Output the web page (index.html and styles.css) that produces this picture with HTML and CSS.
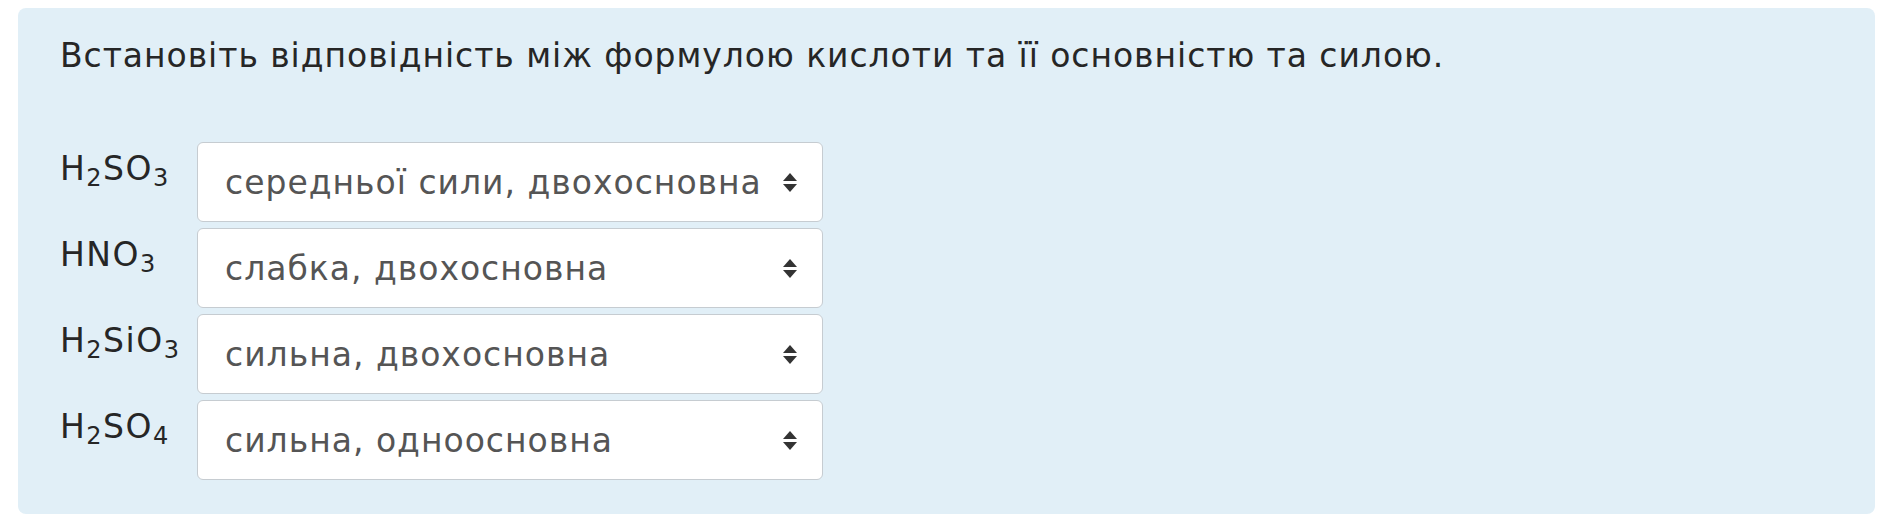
FILE: index.html
```html
<!DOCTYPE html>
<html lang="uk">
<head>
<meta charset="utf-8">
<link rel="stylesheet" href="styles.css">
</head>
<body>
<div class="page">
  <div class="panel">
    <p class="question">Встановіть відповідність між формулою кислоти та її основністю та силою.</p>
    <div class="rows">
      <div class="row">
        <div class="label">H<sub>2</sub>SO<sub>3</sub></div>
        <div class="select"><span class="value">середньої сили, двохосновна</span><svg class="arrows" width="14" height="19" viewBox="0 0 14 19"><path d="M7 0 L14 8 H0 Z M7 19 L14 11 H0 Z"/></svg></div>
      </div>
      <div class="row">
        <div class="label">HNO<sub>3</sub></div>
        <div class="select"><span class="value">слабка, двохосновна</span><svg class="arrows" width="14" height="19" viewBox="0 0 14 19"><path d="M7 0 L14 8 H0 Z M7 19 L14 11 H0 Z"/></svg></div>
      </div>
      <div class="row">
        <div class="label">H<sub>2</sub>SiO<sub>3</sub></div>
        <div class="select"><span class="value">сильна, двохосновна</span><svg class="arrows" width="14" height="19" viewBox="0 0 14 19"><path d="M7 0 L14 8 H0 Z M7 19 L14 11 H0 Z"/></svg></div>
      </div>
      <div class="row">
        <div class="label">H<sub>2</sub>SO<sub>4</sub></div>
        <div class="select"><span class="value">сильна, одноосновна</span><svg class="arrows" width="14" height="19" viewBox="0 0 14 19"><path d="M7 0 L14 8 H0 Z M7 19 L14 11 H0 Z"/></svg></div>
      </div>
    </div>
  </div>
</div>
</body>
</html>
```

FILE: styles.css
```css
html, body {
  margin: 0;
  padding: 0;
  background: #ffffff;
}

.page {
  padding: 8px 7px 13px 18px;
}

.panel {
  background: #e1eff7;
  border-radius: 8px;
  padding: 26px 42px 34px 42px;
  font-family: "DejaVu Sans", "Open Sans", sans-serif;
  color: #262626;
}

.question {
  margin: 0 0 64px 0;
  font-size: 33px;
  line-height: 44px;
  letter-spacing: 0.95px;
}

.rows {
  display: flex;
  flex-direction: column;
  gap: 6px;
}

.row {
  display: flex;
  align-items: flex-start;
}

.label {
  width: 137px;
  flex: none;
  font-size: 33px;
  line-height: 44px;
  padding-top: 5px;
  letter-spacing: 1.5px;
}

.label sub {
  font-size: 24px;
  line-height: 0;
  vertical-align: -6px;
}

.select {
  box-sizing: border-box;
  width: 626px;
  height: 80px;
  background: #ffffff;
  border: 1px solid #c6ccd1;
  border-radius: 6px;
  display: flex;
  align-items: center;
  justify-content: space-between;
  padding: 0 25px 0 27px;
  font-size: 33px;
  letter-spacing: 1px;
  color: #555555;
}

.arrows {
  fill: #333333;
  flex: none;
}
```
